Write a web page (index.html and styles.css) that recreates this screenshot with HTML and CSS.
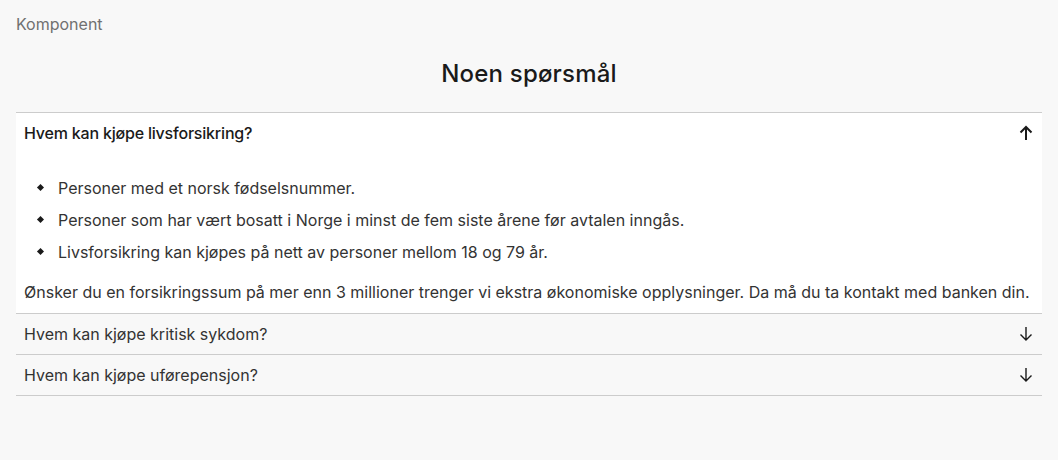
FILE: index.html
```html
<!DOCTYPE html>
<html lang="no">
<head>
<meta charset="utf-8">
<title>Komponent</title>
<link rel="stylesheet" href="styles.css">
</head>
<body>
<div class="page">
  <div class="label">Komponent</div>
  <h2 class="title">Noen spørsmål</h2>
  <div class="accordion">
    <div class="item open">
      <div class="head">
        <span class="q">Hvem kan kjøpe livsforsikring?</span>
        <svg class="arrow" width="16" height="16" viewBox="0 0 16 16"><path d="M8 15V2M2.5 7.5L8 2l5.5 5.5" fill="none" stroke="#1a1a1a" stroke-width="2"/></svg>
      </div>
      <div class="panel">
        <ul class="list">
          <li>Personer med et norsk fødselsnummer.</li>
          <li>Personer som har vært bosatt i Norge i minst de fem siste årene før avtalen inngås.</li>
          <li>Livsforsikring kan kjøpes på nett av personer mellom 18 og 79 år.</li>
        </ul>
        <p class="text">Ønsker du en forsikringssum på mer enn 3 millioner trenger vi ekstra økonomiske opplysninger. Da må du ta kontakt med banken din.</p>
      </div>
    </div>
    <div class="item">
      <div class="head">
        <span class="q">Hvem kan kjøpe kritisk sykdom?</span>
        <svg class="arrow" width="16" height="16" viewBox="0 0 16 16"><path d="M8 1v13M2.5 8.5L8 14l5.5-5.5" fill="none" stroke="#1a1a1a" stroke-width="1.4"/></svg>
      </div>
    </div>
    <div class="item">
      <div class="head">
        <span class="q">Hvem kan kjøpe uførepensjon?</span>
        <svg class="arrow" width="16" height="16" viewBox="0 0 16 16"><path d="M8 1v13M2.5 8.5L8 14l5.5-5.5" fill="none" stroke="#1a1a1a" stroke-width="1.4"/></svg>
      </div>
    </div>
  </div>
</div>
</body>
</html>
```
FILE: styles.css
```css
html, body {
  margin: 0;
  padding: 0;
  background: #f8f8f8;
}
body {
  font-family: Inter, "Liberation Sans", sans-serif;
  color: #1a1a1a;
  font-size: 16px;
}
.page {
  padding: 13px 16px 0;
}
.label {
  font-size: 16px;
  line-height: 22px;
  color: #707070;
}
.title {
  margin: 21px 0 0;
  text-align: center;
  font-size: 24px;
  line-height: 36px;
  font-weight: 500;
  letter-spacing: 0.2px;
  color: #1a1a1a;
}
.accordion {
  margin-top: 20px;
  border-top: 1px solid #cccccc;
}
.item {
  border-bottom: 1px solid #cccccc;
}
.item.open {
  background: #ffffff;
}
.head {
  display: flex;
  align-items: center;
  justify-content: space-between;
  padding: 8px 8px;
  line-height: 24px;
  color: #333;
}
.item.open .q {
  font-weight: 500;
  letter-spacing: -0.2px;
  color: #1a1a1a;
}
.arrow {
  display: block;
}
.panel {
  padding: 0 8px 9px;
  color: #333;
}
.list {
  list-style: none;
  margin: 23px 0 16px;
  padding: 0 0 0 34px;
}
.list li {
  position: relative;
  line-height: 24px;
  margin-bottom: 8px;
}
.list li:last-child {
  margin-bottom: 0;
}
.list li::before {
  content: "";
  position: absolute;
  left: -20px;
  top: 9px;
  width: 5px;
  height: 5px;
  background: #1a1a1a;
  transform: rotate(45deg);
}
.text {
  margin: 0;
  line-height: 24px;
}
```
